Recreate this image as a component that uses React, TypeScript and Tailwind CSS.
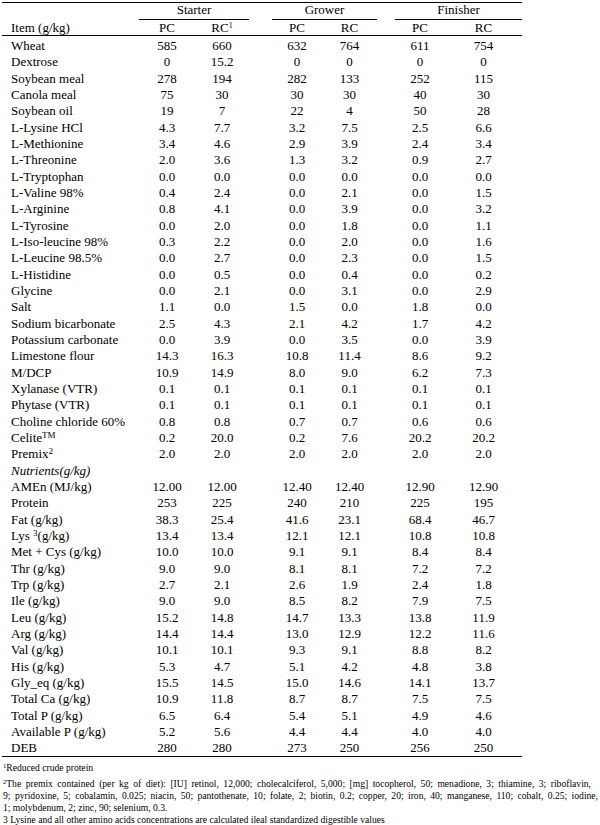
import React from "react";

type Row = [React.ReactNode, string[]] | ["__nutrients"];

const Sup = ({ children }: { children: React.ReactNode }) => (
  <sup className="text-[9px] leading-none">{children}</sup>
);

const rows: Row[] = [
  ["Wheat", ["585", "660", "632", "764", "611", "754"]],
  ["Dextrose", ["0", "15.2", "0", "0", "0", "0"]],
  ["Soybean meal", ["278", "194", "282", "133", "252", "115"]],
  ["Canola meal", ["75", "30", "30", "30", "40", "30"]],
  ["Soybean oil", ["19", "7", "22", "4", "50", "28"]],
  ["L-Lysine HCl", ["4.3", "7.7", "3.2", "7.5", "2.5", "6.6"]],
  ["L-Methionine", ["3.4", "4.6", "2.9", "3.9", "2.4", "3.4"]],
  ["L-Threonine", ["2.0", "3.6", "1.3", "3.2", "0.9", "2.7"]],
  ["L-Tryptophan", ["0.0", "0.0", "0.0", "0.0", "0.0", "0.0"]],
  ["L-Valine 98%", ["0.4", "2.4", "0.0", "2.1", "0.0", "1.5"]],
  ["L-Arginine", ["0.8", "4.1", "0.0", "3.9", "0.0", "3.2"]],
  ["L-Tyrosine", ["0.0", "2.0", "0.0", "1.8", "0.0", "1.1"]],
  ["L-Iso-leucine 98%", ["0.3", "2.2", "0.0", "2.0", "0.0", "1.6"]],
  ["L-Leucine 98.5%", ["0.0", "2.7", "0.0", "2.3", "0.0", "1.5"]],
  ["L-Histidine", ["0.0", "0.5", "0.0", "0.4", "0.0", "0.2"]],
  ["Glycine", ["0.0", "2.1", "0.0", "3.1", "0.0", "2.9"]],
  ["Salt", ["1.1", "0.0", "1.5", "0.0", "1.8", "0.0"]],
  ["Sodium bicarbonate", ["2.5", "4.3", "2.1", "4.2", "1.7", "4.2"]],
  ["Potassium carbonate", ["0.0", "3.9", "0.0", "3.5", "0.0", "3.9"]],
  ["Limestone flour", ["14.3", "16.3", "10.8", "11.4", "8.6", "9.2"]],
  ["M/DCP", ["10.9", "14.9", "8.0", "9.0", "6.2", "7.3"]],
  ["Xylanase (VTR)", ["0.1", "0.1", "0.1", "0.1", "0.1", "0.1"]],
  ["Phytase (VTR)", ["0.1", "0.1", "0.1", "0.1", "0.1", "0.1"]],
  ["Choline chloride 60%", ["0.8", "0.8", "0.7", "0.7", "0.6", "0.6"]],
  [
    <>
      Celite<Sup>TM</Sup>
    </>,
    ["0.2", "20.0", "0.2", "7.6", "20.2", "20.2"],
  ],
  [
    <>
      Premix<Sup>2</Sup>
    </>,
    ["2.0", "2.0", "2.0", "2.0", "2.0", "2.0"],
  ],
  ["__nutrients"],
  ["AMEn (MJ/kg)", ["12.00", "12.00", "12.40", "12.40", "12.90", "12.90"]],
  ["Protein", ["253", "225", "240", "210", "225", "195"]],
  ["Fat (g/kg)", ["38.3", "25.4", "41.6", "23.1", "68.4", "46.7"]],
  [
    <>
      Lys <Sup>3</Sup>(g/kg)
    </>,
    ["13.4", "13.4", "12.1", "12.1", "10.8", "10.8"],
  ],
  ["Met + Cys (g/kg)", ["10.0", "10.0", "9.1", "9.1", "8.4", "8.4"]],
  ["Thr (g/kg)", ["9.0", "9.0", "8.1", "8.1", "7.2", "7.2"]],
  ["Trp (g/kg)", ["2.7", "2.1", "2.6", "1.9", "2.4", "1.8"]],
  ["Ile (g/kg)", ["9.0", "9.0", "8.5", "8.2", "7.9", "7.5"]],
  ["Leu (g/kg)", ["15.2", "14.8", "14.7", "13.3", "13.8", "11.9"]],
  ["Arg (g/kg)", ["14.4", "14.4", "13.0", "12.9", "12.2", "11.6"]],
  ["Val (g/kg)", ["10.1", "10.1", "9.3", "9.1", "8.8", "8.2"]],
  ["His (g/kg)", ["5.3", "4.7", "5.1", "4.2", "4.8", "3.8"]],
  ["Gly_eq (g/kg)", ["15.5", "14.5", "15.0", "14.6", "14.1", "13.7"]],
  ["Total Ca (g/kg)", ["10.9", "11.8", "8.7", "8.7", "7.5", "7.5"]],
  ["Total P (g/kg)", ["6.5", "6.4", "5.4", "5.1", "4.9", "4.6"]],
  ["Available P (g/kg)", ["5.2", "5.6", "4.4", "4.4", "4.0", "4.0"]],
  ["DEB", ["280", "280", "273", "250", "256", "250"]],
];

const GRID =
  "grid grid-cols-[137px_56px_54px_23px_50px_55px_18px_50px_77px]";

function DataRow({ label, vals }: { label: React.ReactNode; vals: string[] }) {
  return (
    <div className={`${GRID} h-[16.33px] items-center leading-none`}>
      <div className="pl-[9px] whitespace-nowrap">{label}</div>
      <div className="text-center">{vals[0]}</div>
      <div className="text-center">{vals[1]}</div>
      <div />
      <div className="text-center">{vals[2]}</div>
      <div className="text-center">{vals[3]}</div>
      <div />
      <div className="text-center">{vals[4]}</div>
      <div className="text-center">{vals[5]}</div>
    </div>
  );
}

export default function App() {
  return (
    <div
      className="w-[600px] h-[825px] bg-white text-black overflow-hidden"
      style={{ fontFamily: '"Liberation Serif", "Times New Roman", serif' }}
    >
      <div className="pl-[2px] pt-[2px]">
        <div className="w-[520px] text-[13px]">
          <div className="border-t border-black" />
          {/* group header */}
          <div className={`${GRID} h-[17px] items-end leading-none`}>
            <div />
            <div className="col-span-2 text-center border-b border-black pb-[3px]">
              Starter
            </div>
            <div />
            <div className="col-span-2 text-center border-b border-black pb-[3px]">
              Grower
            </div>
            <div />
            <div className="col-span-2 text-center border-b border-black pb-[3px]">
              Finisher
            </div>
          </div>
          <div
            className={`${GRID} h-[16px] items-center leading-none border-b border-black`}
          >
            <div className="pl-[9px] whitespace-nowrap">Item (g/kg)</div>
            <div className="text-center">PC</div>
            <div className="text-center">
              RC<sup className="text-[8px] leading-none">1</sup>
            </div>
            <div />
            <div className="text-center">PC</div>
            <div className="text-center">RC</div>
            <div />
            <div className="text-center">PC</div>
            <div className="text-center">RC</div>
          </div>
          <div className="pt-[1.5px] border-b border-black">
            {rows.map((r, i) =>
              r[0] === "__nutrients" ? (
                <div
                  key={i}
                  className="h-[16.33px] flex items-center pl-[9px] italic leading-none"
                >
                  Nutrients(g/kg)
                </div>
              ) : (
                <DataRow key={i} label={r[0]} vals={(r as [React.ReactNode, string[]])[1]} />
              )
            )}
          </div>
        </div>
        <div className="mt-[5px] pl-[1px] text-[9.6px] leading-[12px] whitespace-nowrap">
          <p className="mb-[4px]">
            <sup className="text-[6.5px] leading-none">1</sup>Reduced crude protein
          </p>
          <p className="w-[588px] text-justify [text-align-last:justify]">
            <sup className="text-[6.5px] leading-none">2</sup>The premix contained (per kg of diet): [IU] retinol,
            12,000; cholecalciferol, 5,000; [mg] tocopherol, 50; menadione, 3; thiamine, 3; riboflavin,
          </p>
          <p className="w-[595px] text-justify [text-align-last:justify]">
            9; pyridoxine, 5; cobalamin, 0.025; niacin, 50; pantothenate, 10; folate, 2; biotin, 0.2;
            copper, 20; iron, 40; manganese, 110; cobalt, 0.25; iodine,
          </p>
          <p>1; molybdenum, 2; zinc, 90; selenium, 0.3.</p>
          <p>
            3 Lysine and all other amino acids concentrations are calculated ileal standardized
            digestible values
          </p>
        </div>
      </div>
    </div>
  );
}
